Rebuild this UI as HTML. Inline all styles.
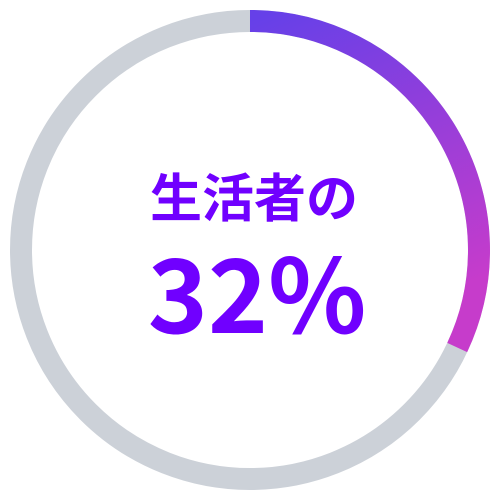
<!DOCTYPE html>
<html><head><meta charset="utf-8"><style>
html,body{margin:0;padding:0;background:#fff;width:500px;height:500px;overflow:hidden}
.t{position:absolute;left:0;width:500px;text-align:center;color:#7000ff;font-family:"Noto Sans CJK JP",sans-serif;font-weight:bold;white-space:nowrap}
</style></head><body>
<svg width="500" height="500" style="position:absolute;left:0;top:0">
<defs><linearGradient id="g" x1="0" y1="0" x2="0.3" y2="1"><stop offset="0" stop-color="#6640e8"/><stop offset="1" stop-color="#c63ccb"/></linearGradient></defs>
<circle cx="250" cy="250" r="229" fill="none" stroke="#ccd1d8" stroke-width="22"/>
<path d="M250 21 A229 229 0 0 1 457.2 347.5" fill="none" stroke="url(#g)" stroke-width="22"/>
</svg>
<div class="t" style="top:160px;left:4px;font-size:52px;line-height:70px">生活者の</div>
<div class="t" style="top:230px;left:7px;font-size:102px;line-height:120px">32%</div>
</body></html>
